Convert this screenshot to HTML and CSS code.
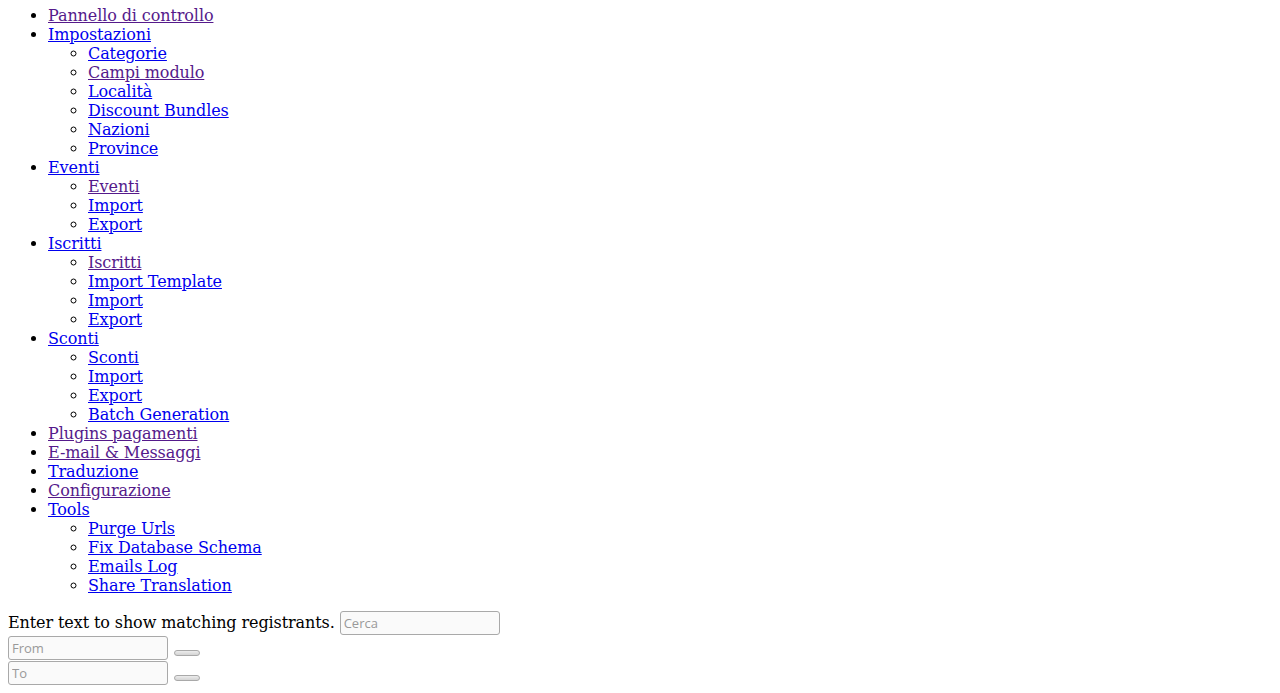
FILE: index.html
```html
<!DOCTYPE html>
<html lang="it">
<head>
  <meta charset="UTF-8" />
  <title>Iscritti</title>
  <link rel="stylesheet" href="styles.css">
</head>
<body>
  <ul class="menu">
    <li><a href="#" class="visited">Pannello di controllo</a></li>
    <li><a href="#">Impostazioni</a>
      <ul>
        <li><a href="#">Categorie</a></li>
        <li><a href="#" class="visited">Campi modulo</a></li>
        <li><a href="#">Località</a></li>
        <li><a href="#">Discount Bundles</a></li>
        <li><a href="#">Nazioni</a></li>
        <li><a href="#">Province</a></li>
      </ul>
    </li>
    <li><a href="#">Eventi</a>
      <ul>
        <li><a href="#" class="visited">Eventi</a></li>
        <li><a href="#">Import</a></li>
        <li><a href="#">Export</a></li>
      </ul>
    </li>
    <li><a href="#">Iscritti</a>
      <ul>
        <li><a href="#" class="visited">Iscritti</a></li>
        <li><a href="#">Import Template</a></li>
        <li><a href="#">Import</a></li>
        <li><a href="#">Export</a></li>
      </ul>
    </li>
    <li><a href="#">Sconti</a>
      <ul>
        <li><a href="#">Sconti</a></li>
        <li><a href="#">Import</a></li>
        <li><a href="#">Export</a></li>
        <li><a href="#">Batch Generation</a></li>
      </ul>
    </li>
    <li><a href="#" class="visited">Plugins pagamenti</a></li>
    <li><a href="#" class="visited">E-mail &amp; Messaggi</a></li>
    <li><a href="#">Traduzione</a></li>
    <li><a href="#" class="visited">Configurazione</a></li>
    <li><a href="#">Tools</a>
      <ul>
        <li><a href="#">Purge Urls</a></li>
        <li><a href="#">Fix Database Schema</a></li>
        <li><a href="#">Emails Log</a></li>
        <li><a href="#">Share Translation</a></li>
      </ul>
    </li>
  </ul>

  <form class="filters">
    <div class="filter-row search-row">
      <label for="search">Enter text to show matching registrants.</label>
      <input type="text" id="search" placeholder="Cerca" />
    </div>
    <div class="filter-row">
      <input type="text" id="from" placeholder="From" />
      <button type="button"></button>
    </div>
    <div class="filter-row">
      <input type="text" id="to" placeholder="To" />
      <button type="button"></button>
    </div>
  </form>
</body>
</html>
```

FILE: styles.css
```css
body {
  font-family: "DejaVu Serif", serif;
  letter-spacing: -0.1px;
  margin: 6px 8px 8px;
}

.menu {
  margin-top: 0;
}

.menu a {
  color: #0000ee;
}

.menu a.visited {
  color: #551a8b;
}

.filter-row {
  display: flex;
  align-items: flex-end;
  gap: 6px;
  padding-bottom: 1px;
}

.search-row {
  align-items: baseline;
  gap: 5px;
}

.filter-row input {
  box-sizing: border-box;
  width: 160px;
  height: 24px;
  margin: 0;
  padding: 0 3px;
  border: 1px solid #a9a9a9;
  border-radius: 3px;
  background: #fafafa;
  font-family: "Open Sans", sans-serif;
  font-size: 13px;
  letter-spacing: 0;
  color: #333;
}

.filter-row input::placeholder {
  color: #999;
}

.filter-row button {
  box-sizing: border-box;
  width: 26px;
  height: 6px;
  margin: 0 0 4px;
  padding: 0;
  border: 1px solid #a9a9a9;
  border-radius: 3px;
  background: linear-gradient(#ececec, #d4d4d4);
}
```
